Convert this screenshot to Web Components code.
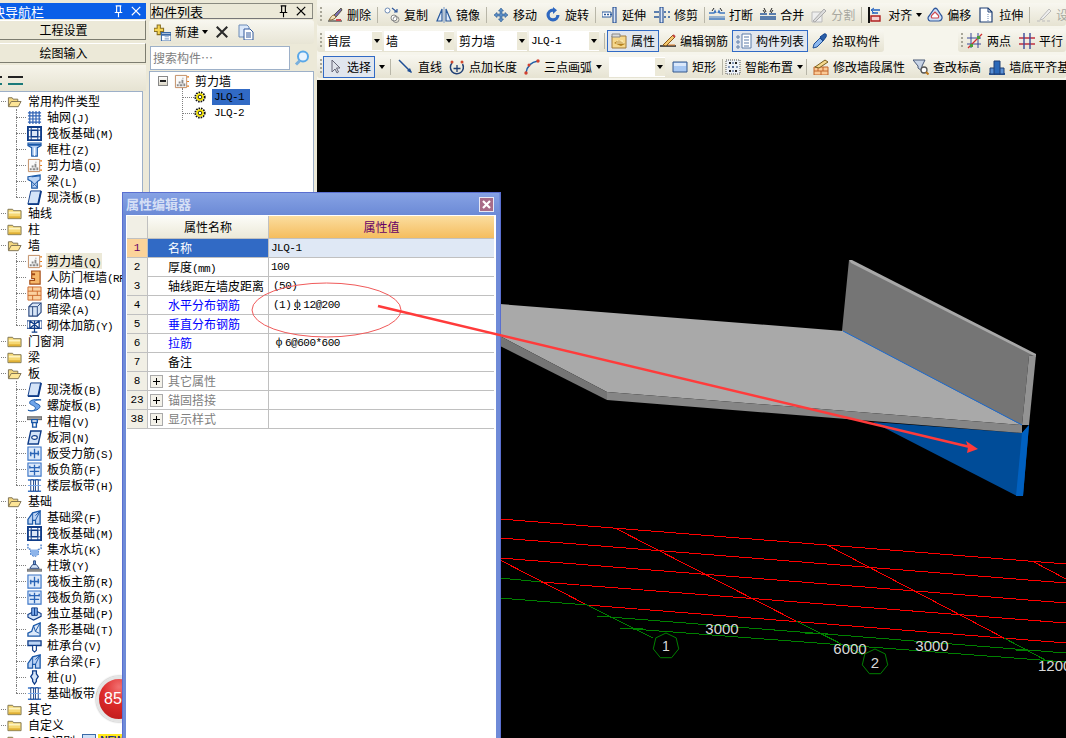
<!DOCTYPE html>
<html lang="zh">
<head>
<meta charset="utf-8">
<title>属性编辑器</title>
<style>
  html, body { margin: 0; width: 1066px; height: 738px; overflow: hidden; background: #ece9d8; }
  body { font: 12px/16px "Noto Sans CJK SC", "Liberation Sans", sans-serif; color: #000; }
</style>
</head>
<body>
<app-shell></app-shell>

<script>
const BLUE = "#1a58a8";
const DK = "#0f3c88";
const ICONS = {
  // tree
  open: `<path d="M1.5 13V4h4l1 1.5h5V8" fill="#f3d77f" stroke="#7d7050"/><path d="M1.5 13.5 4.5 8h10.5l-3 5.500z" fill="#fde596" stroke="#7d7050"/>`,
  folder: `<path d="M1 13.500V3.500h5l1 1.500h8v8.500z" fill="#f6d873" stroke="#7d7350"/><path d="M2 6h12v2H2z" fill="#fdf3c0"/><path d="M2 11h12v2H2z" fill="#e0b035"/>`,
  grid: `<path d="M1 3h14M1 6.300h14M1 9.600h14M1 13h14M3 1v14M6.300 1v14M9.600 1v14M13 1v14" stroke="#2f62b5" stroke-width="1.300" fill="none"/>`,
  raft: `<path d="M1 1h14v14H1z" fill="#fff" stroke="${DK}" stroke-width="2"/><path d="M4.500 4.500h7v7h-7z" fill="#dbe6f6" stroke="${DK}" stroke-width="1.500"/><path d="M1 4.500h3M12 4.500h3M1 11.500h3M12 11.500h3M4.500 1v3M11.500 1v3M4.500 12v3M11.500 12v3" stroke="${DK}"/>`,
  column: `<path d="M1 1h14v3l-4 2v9H5V6L1 4z" fill="#bcd4f5" stroke="${BLUE}" stroke-width="1.200"/><path d="M1 3h14" stroke="${BLUE}" stroke-width="2"/><path d="M8 6v9" stroke="#fff"/>`,
  shear: `<path d="M1.500 1.500h12v13h-12z" fill="#fafafa" stroke="#c08a60"/><path d="M3 13h2v-2H3zm3 0h3v-2H6zm4 0h2v-3h-2zM5 10h2V8H5zm3 0h2V6H8zM9 5h1V4H9z" fill="#8a8a8a"/><path d="M14 3h2M14 8h2M14 13h2" stroke="#e07818" stroke-width="1.300"/>`,
  beam: `<path d="M1 3 14 1v5l-3 2v7H5V8L1 6z" fill="#bcd4f5" stroke="${BLUE}" stroke-width="1.200"/><path d="M5 8l6 6M11 8l-5 5M5 3l9-1" stroke="${BLUE}"/>`,
  slab: `<path d="M4 1h11l-3 14H1z" fill="#d5e4f8" stroke="${DK}"/><path d="M1 15h11l3-14" fill="none" stroke="${DK}" stroke-width="2"/>`,
  door: `<path d="M5 1h9v14H3v-4h5V9H5V5h3V4H5z" fill="#f6b86a" stroke="#a24a14" stroke-width="1.200"/>`,
  brick: `<path d="M1 1h14v14H1z" fill="#fbd2a0" stroke="#cc6a2c"/><path d="M1 5.500h14M1 10h14M6 1v4.500M11 5.500V10M6 10v5" stroke="#cc6a2c"/>`,
  hidden: `<path d="M2 5 6 1h9v10l-4 4H2z" fill="#d8e5f6" stroke="#26447c" stroke-width="1.200"/><path d="M2 5h9v10M11 5l4-4" fill="none" stroke="#26447c"/><path d="M6 5v10" stroke="#26447c"/>`,
  wallbar: `<path d="M0 3h16v8H0z" fill="#fff" stroke="${DK}"/><path d="M3 3v8h10V3M3 3l10 8M13 3 3 11M8 3v12M5 15h6" fill="none" stroke="${DK}" stroke-width="1.300"/>`,
  spiral: `<path d="M1 13c5 2 10-1 7-4-3-2-6-2-5-5 1-2 6-3 12-2-4 0-7 1-7 2 0 2 6 2 6 5-1 4-8 6-13 4z" fill="#6ea4ea" stroke="${BLUE}"/>`,
  cap: `<path d="M0 3h16v3H0z" fill="#a0a0a0" stroke="#555"/><path d="M5 6h6v3H5zM6 9h4v5H6z" fill="#fff" stroke="${BLUE}" stroke-width="1.500"/>`,
  hole: `<path d="M4 1h11l-3 14H1z" fill="#d5e4f8" stroke="${DK}" stroke-width="1.500"/><ellipse cx="8" cy="8" rx="3" ry="2" fill="#fff" stroke="${DK}" stroke-width="1.200"/>`,
  barmain: `<path d="M1 1h14v14H1z" fill="#dce9fa" stroke="#3a74c6" stroke-width="1.200"/><path d="M8 3v10M3 8h10M4 6v5M12 5v5" stroke="#2a64b6" stroke-width="1.400"/>`,
  barneg: `<path d="M1 1h14v14H1z" fill="#dce9fa" stroke="#3a74c6" stroke-width="1.200"/><path d="M8 3v11M3 6h10M3 10h10M3 4v3M13 4v3" stroke="#2a64b6" stroke-width="1.400"/>`,
  band: `<path d="M1 2h14M1 14h14" stroke="#3a74c6" stroke-width="1.600"/><path d="M4 2h3v12H4zM9 2h3v12H9z" fill="#fff" stroke="${DK}"/><path d="M1 8h14" stroke="#7aa8e8"/>`,
  fbeam: `<path d="M1 15V10L6 3l8-2v14H9v-4H6v4z" fill="#bcd4f5" stroke="${BLUE}" stroke-width="1.400"/><path d="M6 3v8M9 11 14 1M9 6l5-5" stroke="${BLUE}"/>`,
  pit: `<path d="M1 2v5l3 1v5l3 2h2l3-2V8l3-1V2" fill="none" stroke="#3a74c6" stroke-width="1.400" stroke-dasharray="2 1"/><path d="M4 8h8v5l-3 2H7l-3-2z" fill="#8db4ea"/>`,
  pier: `<path d="M0 12h16v2H0z" fill="#a0a0a0" stroke="#666"/><path d="M3 11 6 7h4l3 4z" fill="#d5e4f8" stroke="#26447c"/><path d="M7 3h2v4H7z" fill="#7aa8e8" stroke="#26447c"/>`,
  iso: `<path d="M1 9l8-4 6 3v3l-8 4-6-3z" fill="#d5e4f8" stroke="${DK}" stroke-width="1.200"/><path d="M5 2h6v8H5z" fill="#7aa8e8" stroke="${DK}"/><path d="M8 2v8" stroke="${DK}"/>`,
  strip: `<path d="M1 15v-3l4-2 2-6 7-3v14z" fill="#dce9fa" stroke="${BLUE}" stroke-width="1.400"/><path d="M7 4l2 6 4 2M9 10 14 1" fill="none" stroke="${BLUE}"/>`,
  pilecap: `<path d="M1 3h14v5H1z" fill="#bcd4f5" stroke="${DK}" stroke-width="1.400"/><path d="M6 8h4v5l-2 2-2-2z" fill="#fff" stroke="${DK}" stroke-width="1.200"/>`,
  pile: `<path d="M6 1h4v3l2 3-2 3v2l-2 3-2-3v-2L4 7l2-3z" fill="#d5e4f8" stroke="${DK}" stroke-width="1.400"/>`,
  // toolbar
  brush: `<path d="M1 14h14" stroke="#222"/><path d="M14 1 7 8l2 2 6-7z" fill="#7b6db0" stroke="#554"/><path d="M7 8c-2 0-3 2-5 5 3 0 6-1 7-3z" fill="#f3e3bc" stroke="#8a6a3a"/><path d="M9 13h5" stroke="#d04a50" stroke-width="2"/>`,
  copy: `<circle cx="3.500" cy="3.500" r="2.500" fill="#fff" stroke="#6d8bb5"/><circle cx="10" cy="11" r="3" fill="#fff" stroke="#888"/><circle cx="12" cy="12.500" r="3" fill="none" stroke="#888"/><path d="M8 1l5 4M13 2v3h-3" fill="none" stroke="#30589c" stroke-width="1.200"/>`,
  mirror: `<path d="M6 2 1 14h5zM10 2l5 12h-5z" fill="#e0ebfa" stroke="#2a5a9c" stroke-width="1.200"/><path d="M8 0v16" stroke="#7a9ac8"/>`,
  move: `<path d="M8 1 5.500 4H7v3H4V5.500L1 8l3 2.500V9h3v3H5.500L8 15l2.500-3H9V9h3v1.500L15 8l-3-2.500V7H9V4h1.500z" fill="#5a8cc4" stroke="#2c5a90" stroke-width=".6"/>`,
  rotate: `<path d="M8 1.500a6.500 6.500 0 1 0 6.500 6.500h-3.200A3.300 3.300 0 1 1 8 4.700V7l4-3.700L8 0z" fill="#2e68c0"/>`,
  extend: `<path d="M11 0h3v16h-3z" fill="#dbe6f6" stroke="${DK}"/><path d="M0 5h9v5H0z" fill="#fff" stroke="#2a5a9c"/><path d="M2 7.500h8" stroke="#2a5a9c" stroke-dasharray="2 1" stroke-width="1.500"/>`,
  trim: `<path d="M6 0h3v16H6z" fill="#dbe6f6" stroke="${DK}"/><path d="M0 5h5M0 10h5" stroke="#2a5a9c" stroke-width="1.500"/><path d="M10 5h2M14 5h2M10 10h2M14 10h2" stroke="#2a5a9c" stroke-width="1.500"/>`,
  break: `<path d="M0 6h5l1-2 1 2M9 6l1-2 1 2h5M0 12h16" fill="none" stroke="#3f78c0" stroke-width="1.500"/><path d="M0 10h16" stroke="#3f78c0"/><path d="M5 1 3 4M11 1l2 3" stroke="#222"/>`,
  merge: `<path d="M0 7h7M9 7h7M0 12h16M0 10h16" stroke="#2a5a9c" stroke-width="1.300"/><path d="M4 1l2 4M12 1l-2 4M3 3l2 3M13 3l-2 3" stroke="#222"/>`,
  split: `<path d="M1 5h10v10H1z" fill="#eee" stroke="#bbb"/><path d="M2 14 13 2l2 2L4 15z" fill="#ddd" stroke="#aaa"/>`,
  align: `<path d="M1 0v16" stroke="#111" stroke-width="2"/><path d="M4 3h8M4 6h6" stroke="#1f5fbf" stroke-width="1.600"/><path d="M3 9h9v5H3z" fill="#f6d0d0" stroke="#b02020" stroke-width="1.400"/><path d="M6 1 3 3l3 3" fill="none" stroke="#1f5fbf"/>`,
  offset: `<path d="M3 14a3 3 0 0 1-1-5l5-7c1-1 2-1 3 0l4 6c2 2 1 6-2 6z" fill="#cfe0f7" stroke="#30589c" stroke-width="1.200"/><path d="M5 11a2 2 0 0 1 0-3l3-3 3 3a2 2 0 0 1 0 3z" fill="#fff" stroke="#d04a50" stroke-width="1.200"/>`,
  stretch: `<path d="M1 1h8l4 4v10H1z" fill="#fff" stroke="#1f3f74" stroke-width="1.200"/><path d="M9 1v4h4" fill="none" stroke="#1f3f74"/><path d="M9 7v7M12 9l1 2" stroke="#6d8bb5" stroke-dasharray="1 1"/>`,
  setting: `<path d="M1 14h3M6 14h3M11 14h3" stroke="#bbb"/><path d="M5 11 13 2l2 2-8 8-3 1z" fill="#eee" stroke="#bbb"/>`,
  prop: `<path d="M1 3h14v12H1z" fill="#f6d88c" stroke="#a07a3c"/><path d="M1 1h8v3H1z" fill="#dcdcdc" stroke="#888"/><path d="M3 10l5-3 6 4-4 2z" fill="#b47f1c"/><path d="M5 10h8M6 8h6" stroke="#fff3c8"/>`,
  editbar: `<path d="M0 13h16" stroke="#222" stroke-width="1.300"/><path d="M3 12 13 2l2 2L6 13z" fill="#f4c86c" stroke="#8a5a1a"/><path d="M13 2l2 2" stroke="#c04040" stroke-width="2"/><path d="M8 12h7" stroke="#e08030"/>`,
  list: `<path d="M6 1h9v14H6z" fill="#fff" stroke="#5a7aa8"/><path d="M8 4h5M8 7h5M8 10h5M8 13h5" stroke="#5a7aa8"/><path d="M1 3h2v2H1zM1 8h2v2H1zM1 13h2v2H1z" fill="#fff" stroke="#5a7aa8"/>`,
  pick: `<path d="M1 15l1-4 6-6 3 3-6 6z" fill="#8db8ee" stroke="#1f4f96"/><path d="M8 4l4-3c2-1 3 1 2 3l-3 4z" fill="#2a5fa8" stroke="#12408a"/>`,
  twopt: `<path d="M0 5h14M0 11h14M4 0v15M11 0v15" stroke="#3a4a9a"/><path d="M1 15 15 1" stroke="#d03030" stroke-width="1.200"/><path d="M3 11h3v3H3zM10 3h3v3h-3z" fill="#4aa03a"/>`,
  para: `<path d="M0 5h16M0 11h16" stroke="#c03040" stroke-width="1.400"/><path d="M5 0v16M11 0v16" stroke="#3a4a9a" stroke-width="1.400"/>`,
  cursor: `<path d="M5 1v12l3-3 2 4 1.500-1-2-4h3.500z" fill="#dfe3ea" stroke="#667"/>`,
  line: `<path d="M1 1l12 12" stroke="#1f4f96" stroke-width="1.500"/><path d="M14 14l-2-5-3 3z" fill="#1f4f96"/>`,
  ptlen: `<path d="M13.500 5A6.500 6.500 0 1 1 3 4" fill="none" stroke="#1f3f74" stroke-width="1.500"/><path d="M8 6v7M4.500 9.500h7" stroke="#1f3f74" stroke-width="1.300"/><circle cx="3" cy="3" r="1.500" fill="#d04a30"/><circle cx="13" cy="3" r="1.500" fill="#d04a30"/>`,
  arc: `<path d="M2 14C3 7 7 3 14 2" fill="none" stroke="#1f5fa8" stroke-width="1.500"/><circle cx="2" cy="14" r="1.700" fill="#d04030"/><circle cx="5" cy="6" r="1.500" fill="#d04030"/><circle cx="14" cy="2" r="1.700" fill="#d04030"/>`,
  rect: `<path d="M1 3h14v10H1z" fill="#a8c8f2" stroke="#35588c"/><path d="M2 4h12v3H2z" fill="#dbe8fa"/>`,
  smart: `<path d="M1 1h14v14H1z" fill="#eef2f8" stroke="#555" stroke-dasharray="1 1"/><path d="M8 3v10M3 8h10" stroke="#1f3f74" stroke-dasharray="2 2"/><path d="M4 3h2v2H4zM10 3h2v2h-2zM4 11h2v2H4zM10 11h2v2h-2z" fill="#222"/>`,
  wallfix: `<path d="M1 8h14v8H1z" fill="#fbc995" stroke="#c0642a"/><path d="M1 12h14M5 8v4M10 8v4M8 12v4" stroke="#c0642a"/><path d="M2 8 12 1l3 2-9 6z" fill="#f6d88c" stroke="#7a6020"/>`,
  level: `<path d="M0 1h12L9 7v5L5 9V7z" fill="#c8d4e6" stroke="#4a5a78"/><circle cx="11" cy="11" r="3" fill="#fff" stroke="#555" stroke-width="1.300"/><path d="M13 13l2.500 2.500" stroke="#c07818" stroke-width="2"/>`,
  wallbase: `<path d="M0 15h16" stroke="#2a5a9c" stroke-width="2"/><path d="M1 9h5v6H1zM10 9h5v6h-5z" fill="#5a90d4" stroke="#1f3f74"/><path d="M5 2h6v13H5z" fill="#2a68b8" stroke="#1f3f74"/>`,
  newitem: `<path d="M3 1h3v3h3v3H6v3H3V7H0V4h3z" fill="#f5d452" stroke="#8a7020"/><path d="M7 8h9v8H7z" fill="#fff" stroke="#3a6aa8"/><path d="M7 10h9" stroke="#3a6aa8" stroke-width="2"/><path d="M10 12h4M10 14h4" stroke="#8aa8d0"/>`,
  del: `<path d="M2 2l12 12M14 2 2 14" stroke="#2a2a2a" stroke-width="2.400"/>`,
  doc: `<path d="M1 1h8l2 2v10H1z" fill="#dbe8fa" stroke="#6d8bb5"/><path d="M6 5h6l3 3v8H6z" fill="#fff" stroke="#30589c"/><path d="M8 9h5M8 11h5M8 13h5" stroke="#30589c"/>`,
  search: `<circle cx="9" cy="6.500" r="5" fill="#eaf4ff" stroke="#5aa8e8" stroke-width="2"/><path d="M6 10.500 2 14.500" stroke="#7ab0dc" stroke-width="3"/>`,
  gear: `<circle cx="8" cy="8" r="6" fill="none" stroke="#111" stroke-width="3" stroke-dasharray="2 1.200"/><circle cx="8" cy="8" r="5" fill="#ffee00"/><circle cx="8" cy="8" r="2.400" fill="#fff" stroke="#222" stroke-width="1.300"/>`,
  pin: `<path d="M5 2h6M6 2v7M10 2v7M4 9h8M8 9v5" fill="none" stroke="currentColor" stroke-width="1.200"/>`,
  close: `<path d="M3 3l9 9M12 3l-9 9" stroke="currentColor" stroke-width="1.200"/>`,
  closeb: `<path d="M3 3l7 7M10 3l-7 7" stroke="currentColor" stroke-width="2.200"/>`
};

class XIcon extends HTMLElement {
  connectedCallback() {
    const size = this.getAttribute("size") || 16;
    const box = this.getAttribute("box") || 16;
    this.attachShadow({ mode: "open" }).innerHTML = `
      <style>:host{display:inline-block;width:${size}px;height:${size}px;flex:none;line-height:0}svg{display:block}</style>
      <svg width="${size}" height="${size}" viewBox="0 0 ${box} ${box}">${ICONS[this.getAttribute("name")] || ""}</svg>`;
  }
}
customElements.define("x-icon", XIcon);

//////////////////////////////////tree
class TreeRow extends HTMLElement {
  connectedCallback() {
    const kind = this.getAttribute("kind") || "leaf";
    const folder = kind !== "leaf";
    const label = this.getAttribute("label");
    const key = this.getAttribute("key") || "";
    const icon = this.getAttribute("icon") || (kind === "open" ? "open" : "folder");
    this.attachShadow({ mode: "open" }).innerHTML = `
      <style>
        :host{display:flex;align-items:center;height:16px;position:relative;white-space:nowrap;padding-left:${folder ? 25 : 45}px}
        .dots-h{position:absolute;top:8px;left:${folder ? 13 : 34}px;width:${folder ? 11 : 10}px;border-top:1px dotted #808080}
        .dots-v{position:absolute;top:0;left:34px;height:${this.hasAttribute("last") ? 8 : 16}px;border-left:1px dotted #808080}
        .text{margin-left:${folder ? 5 : 4}px;padding:0 1px;height:16px;line-height:16px}
        :host([selected]) .text{background:#ece9d8}
        .k{font:11px/16px "Liberation Mono",monospace;letter-spacing:-.6px}
      </style>
      ${folder ? "" : '<span class="dots-v"></span>'}
      <span class="dots-h"></span>
      <x-icon name="${icon}" size="15"></x-icon>
      <span class="text">${label}<span class="k">${key}</span></span>
      <slot></slot>`;
  }
}
customElements.define("tree-row", TreeRow);

const NAV_ROWS = [
  ["open", "常用构件类型"],
  ["grid", "轴网", "(J)"], ["raft", "筏板基础", "(M)"], ["column", "框柱", "(Z)"], ["shear", "剪力墙", "(Q)"], ["beam", "梁", "(L)"], ["slab", "现浇板", "(B)", "last"],
  ["folder", "轴线"], ["folder", "柱"], ["open", "墙"],
  ["shear", "剪力墙", "(Q)", "selected"], ["door", "人防门框墙", "(RF)"], ["brick", "砌体墙", "(Q)"], ["hidden", "暗梁", "(A)"], ["wallbar", "砌体加筋", "(Y)", "last"],
  ["folder", "门窗洞"], ["folder", "梁"], ["open", "板"],
  ["slab", "现浇板", "(B)"], ["spiral", "螺旋板", "(B)"], ["cap", "柱帽", "(V)"], ["hole", "板洞", "(N)"], ["barmain", "板受力筋", "(S)"], ["barneg", "板负筋", "(F)"], ["band", "楼层板带", "(H)", "last"],
  ["open", "基础"],
  ["fbeam", "基础梁", "(F)"], ["raft", "筏板基础", "(M)"], ["pit", "集水坑", "(K)"], ["pier", "柱墩", "(Y)"], ["barmain", "筏板主筋", "(R)"], ["barneg", "筏板负筋", "(X)"], ["iso", "独立基础", "(P)"], ["strip", "条形基础", "(T)"], ["pilecap", "桩承台", "(V)"], ["fbeam", "承台梁", "(F)"], ["pile", "桩", "(U)"], ["band", "基础板带", "(W)", "last"],
  ["folder", "其它"], ["folder", "自定义"], ["folder", "CAD识别"]
];

class DockTitle extends HTMLElement {
  connectedCallback() {
    this.attachShadow({ mode: "open" }).innerHTML = `
      <style>
        :host{display:flex;align-items:center;height:16px;box-sizing:border-box;overflow:hidden;font-size:13px;line-height:15px}
        .t{flex:1;white-space:nowrap}
        x-icon{margin-left:3px}
      </style>
      <span class="t"><slot></slot></span>
      <x-icon name="pin" size="15"></x-icon>
      <x-icon name="close" size="15"></x-icon>`;
  }
}
customElements.define("dock-title", DockTitle);

class NavPanel extends HTMLElement {
  connectedCallback() {
    const rows = NAV_ROWS.map(([icon, label, key, flag]) => {
      if (icon === "open" || icon === "folder") {
        const extra = label === "CAD识别"
          ? '<span class="cad"></span><span class="new">NEW</span>' : "";
        return `<tree-row kind="${icon}" label="${label}">${extra}</tree-row>`;
      }
      return `<tree-row icon="${icon}" label="${label}" key="${key}" ${flag || ""}></tree-row>`;
    }).join("");
    this.attachShadow({ mode: "open" }).innerHTML = `
      <style>
        :host{display:flex;flex-direction:column;width:165px;margin-left:-19px;padding-top:3px;box-sizing:border-box;flex:none;height:738px;overflow:hidden}
        dock-title{background:#0a5fe8;color:#fff;padding-right:2px;margin-bottom:1px;flex:none}
        .btn{height:20px;box-sizing:border-box;line-height:18px;text-align:center;background:#ece9d8;border:1px solid;border-color:#fff #7d7d70 #7d7d70 #fff;margin-bottom:3px;flex:none}
        .mini{height:26px;display:flex;align-items:center;gap:6px;padding-left:14px;background:linear-gradient(#f6f4ea,#e6e3d2);flex:none;box-sizing:border-box;padding-top:4px;margin-top:-1px}
        .mini i{display:block;width:7px;height:5px;border-top:2px solid #222;border-bottom:2px solid #1a7a7a}
        .mini i+i{width:15px}
        .tree{flex:1;margin-right:3px;background:#fff;border:1px solid #9db0c8;padding-top:1px}
        .cad{display:inline-block;width:14px;height:14px;background:#cfe0f7;border:1px solid #3a6aa8;margin-left:6px;box-sizing:border-box}
        .new{font:bold 10px/14px "Liberation Sans",sans-serif;background:#ffe81a;color:#1a2a8a;margin-left:2px;padding:0 2px}
      </style>
      <dock-title><span style="margin-left:-2px">模块导航栏</span></dock-title>
      <div class="btn">工程设置</div>
      <div class="btn">绘图输入</div>
      <div class="mini"><i></i><i></i></div>
      <div class="tree">${rows}</div>`;
  }
}
customElements.define("nav-panel", NavPanel);

class ListPanel extends HTMLElement {
  connectedCallback() {
    this.attachShadow({ mode: "open" }).innerHTML = `
      <style>
        :host{display:flex;flex-direction:column;width:165px;margin:0 3px;padding-top:3px;box-sizing:border-box;flex:none;height:738px}
        dock-title{border:1px solid #8a8a80;border-bottom-color:#777;padding-right:3px;margin:0 1px 1px 1px;flex:none}
        .tools{height:24px;display:flex;align-items:center;padding-left:5px;border-radius:3px;background:linear-gradient(#f8f7f0,#e8e5d5);margin-bottom:1px;flex:none}
        .tools .caret{width:0;height:0;border:3px solid transparent;border-top:4px solid #000;border-bottom:0;margin:0 7px 0 3px}
        .tools span{margin-left:4px}
        .search{height:26px;display:flex;align-items:center;gap:4px;padding-left:1px;flex:none}
        .input{width:136px;height:22px;border:1px solid #9db0c8;background:#fff;color:#808080;line-height:21px;padding-left:2px}
        .tree{flex:1;background:#fff;border:1px solid #9db0c8;position:relative;padding-top:1px}
        .root,.leaf{display:flex;align-items:center;height:16px;position:relative}
        .plus{width:8px;height:8px;border:1px solid #888;background:linear-gradient(#fff,#ddd8c8);margin:0 6px 0 8px;position:relative}
        .plus::after{content:"";position:absolute;left:1px;right:1px;top:3px;border-top:2px solid #222;height:0}
        .root span{margin-left:6px}
        .leaf{padding-left:44px}
        .leaf span{font:11px/16px "Liberation Mono",monospace;letter-spacing:-.6px;margin-left:6px;padding:0 6px 0 2px;height:16px}
        .leaf.sel span{background:#316ac5}
        .leaf::before{content:"";position:absolute;left:32px;top:8px;width:12px;border-top:1px dotted #808080}
        .v{position:absolute;left:32px;top:16px;height:32px;border-left:1px dotted #808080}
      </style>
      <dock-title>构件列表</dock-title>
      <div class="tools">
        <x-icon name="newitem" size="17"></x-icon><span>新建</span><i class="caret"></i>
        <x-icon name="del" size="14"></x-icon><x-icon name="doc" style="margin-left:9px"></x-icon>
      </div>
      <div class="search"><div class="input">搜索构件…</div><x-icon name="search"></x-icon></div>
      <div class="tree">
        <div class="v"></div>
        <div class="root"><i class="plus"></i><x-icon name="shear" size="15"></x-icon><span>剪力墙</span></div>
        <div class="leaf sel"><x-icon name="gear" size="12"></x-icon><span>JLQ-1</span></div>
        <div class="leaf"><x-icon name="gear" size="12"></x-icon><span>JLQ-2</span></div>
      </div>`;
  }
}
customElements.define("list-panel", ListPanel);

////////////////////////Toolbars
class ToolItem extends HTMLElement {
  connectedCallback() {
    const caret = this.hasAttribute("caret") ? '<i class="caret"></i>' : "";
    this.attachShadow({ mode: "open" }).innerHTML = `
      <style>
        :host{display:flex;align-items:center;height:22px;padding:0 4px;white-space:nowrap;box-sizing:border-box;flex:none;border:1px solid transparent;margin:0 -1px}
        :host([active]){border-color:#316ac5;background:#e1e6ee;margin:0;padding:0 3px}
        :host([disabled]){color:#a8a8a0}
        .l{margin-left:4px}
        .caret{width:0;height:0;border:3px solid transparent;border-top:4px solid #000;border-bottom:0;margin-left:4px;margin-right:1px}
        :host([tight]) .caret{margin-right:-3px}
      </style>
      <x-icon name="${this.getAttribute("icon")}"></x-icon><span class="l">${this.getAttribute("label")}</span>${caret}`;
  }
}
customElements.define("tool-item", ToolItem);

class ToolCombo extends HTMLElement {
  connectedCallback() {
    const w = this.getAttribute("w") || 70;
    this.attachShadow({ mode: "open" }).innerHTML = `
      <style>
        :host{display:flex;align-items:center;width:${w}px;height:20px;margin-right:3px;background:#fff;flex:none;padding-left:2px;box-sizing:border-box}
        .t{flex:1}
        .b{width:10px;height:18px;background:#ece9d8;display:flex;align-items:center;justify-content:center}
        .b i{width:0;height:0;border:3px solid transparent;border-top:4px solid #000;border-bottom:0}
        .m{font:11px/16px "Liberation Mono",monospace;letter-spacing:-.6px}
      </style>
      <span class="t ${this.hasAttribute("mono") ? "m" : ""}"><slot></slot></span><span class="b"><i></i></span>`;
  }
}
customElements.define("tool-combo", ToolCombo);

class ToolBar extends HTMLElement {
  connectedCallback() {
    this.attachShadow({ mode: "open" }).innerHTML = `
      <style>
        :host{display:flex;align-items:center;height:23px;padding-left:3px;border-radius:3px;background:linear-gradient(#f8f7f0,#e6e3d2);overflow:hidden;box-sizing:border-box;flex:none}
        .grip{width:2px;height:16px;margin-right:1px;flex:none;background:repeating-linear-gradient(#a8a698 0 2px,transparent 2px 4px)}
      </style>
      <span class="grip"></span><slot></slot>`;
  }
}
customElements.define("tool-bar", ToolBar);

class ToolSep extends HTMLElement {
  connectedCallback() {
    this.attachShadow({ mode: "open" }).innerHTML = `
      <style>:host{display:block;width:1px;height:16px;margin:0 2px;background:#b8b6a8;flex:none}</style>`;
  }
}
customElements.define("tool-sep", ToolSep);

//////////////////////////////////3D canvas
const heptagon = (cx, cy, r) => Array.from({ length: 7 }, (_, i) => {
  const a = -Math.PI / 2 + i * 2 * Math.PI / 7;
  return `${(cx + r * Math.cos(a)).toFixed(1)},${(cy + r * Math.sin(a)).toFixed(1)}`;
}).join(" ");

class CadCanvas extends HTMLElement {
  connectedCallback() {
    const reds = [[500,519,1066,564],[500,538,1066,583],[500,558,1066,603],[541,582,1066,623],[587,605,1066,643],
      [500,560,587,605],[615,528,796,621],[825,544,1004,638],[1032,561,1066,579]];
    const greens = [[500,578,541,582],[500,598,587,605],[597,616,1066,653],[620,628,1066,662],
      [587,605,653,638],[796,621,863,655],[1004,638,1049,662],[632,628,643,628],[805,633,828,633],[1016,650,1040,650]];
    const seg = (list, c) => list.map(([a,b,d,e]) => `<line x1="${a}" y1="${b}" x2="${d}" y2="${e}" stroke="${c}"/>`).join("");
    this.attachShadow({ mode: "open" }).innerHTML = `
      <style>
        :host{display:block;flex:1;background:#000;overflow:hidden;position:relative}
        svg{display:block}
        text{font-family:"Liberation Sans",sans-serif;fill:#d8d8d8}
      </style>
      <svg width="749" height="658" viewBox="317 80 749 658">
        <polygon points="873,422 1022,433 1029,425 1023,496 1017,496" fill="#004c98"/>
        <polygon points="1022,433 1029,425 1023,496 1016,496" fill="#0060c0"/>
        <polygon points="849,260 1036,355 1029,356 1022,425 842,331" fill="#757575"/>
        <polygon points="849,260 852,260 1036,354 1036,357 851,263" fill="#a8a8a8"/>
        <polygon points="1029,356 1036,355 1029,425 1022,425" fill="#939393"/>
        <polygon points="500,304 843,331 1022,425 607,392 500,336" fill="#a9a9a9"/>
        <polygon points="500,336 607,392 607,400 500,346" fill="#757575"/>
        <polygon points="607,392 1022,425 1022,433 607,400" fill="#868686"/>
        <line x1="843" y1="331" x2="1022" y2="425" stroke="#1a6ad0"/>
        <g shape-rendering="crispEdges" stroke-width="1">${seg(reds, "#ff0000")}${seg(greens, "#008000")}</g>
        <polygon points="${heptagon(666, 646, 13)}" fill="#000" stroke="#008000"/>
        <polygon points="${heptagon(875, 662, 13)}" fill="#000" stroke="#008000"/>
        <text x="666" y="651" font-size="14" text-anchor="middle">1</text>
        <text x="875" y="668" font-size="15" text-anchor="middle">2</text>
        <text x="722" y="634" font-size="15" text-anchor="middle">3000</text>
        <text x="850" y="654" font-size="15" text-anchor="middle">6000</text>
        <text x="932" y="651" font-size="15" text-anchor="middle">3000</text>
        <text x="1038" y="671" font-size="15">12000</text>
      </svg>`;
  }
}
customElements.define("cad-canvas", CadCanvas);

class MainArea extends HTMLElement {
  connectedCallback() {
    this.attachShadow({ mode: "open" }).innerHTML = `
      <style>
        :host{display:flex;flex-direction:column;flex:1;min-width:0;height:738px;padding-top:3px;box-sizing:border-box;overflow:hidden;background:#f6f5ec}
        .row{display:flex;height:23px;margin-bottom:3px;flex:none;justify-content:space-between}
        .row.last{margin-bottom:2px}
        tool-bar.wide{width:749px}
        .caret{width:0;height:0;border:3px solid transparent;border-top:4px solid #000;border-bottom:0;margin:0 1px 0 4px}
      </style>
      <div class="row">
      <tool-bar class="wide">
        <tool-item icon="brush" label="删除"></tool-item><tool-sep></tool-sep>
        <tool-item icon="copy" label="复制"></tool-item>
        <tool-item icon="mirror" label="镜像"></tool-item><tool-sep></tool-sep>
        <tool-item icon="move" label="移动"></tool-item>
        <tool-item icon="rotate" label="旋转"></tool-item><tool-sep></tool-sep>
        <tool-item icon="extend" label="延伸"></tool-item>
        <tool-item icon="trim" label="修剪"></tool-item><tool-sep></tool-sep>
        <tool-item icon="break" label="打断" style="margin-left:-3px"></tool-item>
        <tool-item icon="merge" label="合并" style="margin-left:-2px"></tool-item>
        <tool-item icon="split" label="分割" disabled style="margin-left:-2px"></tool-item><tool-sep></tool-sep>
        <tool-item icon="align" label="对齐" caret tight></tool-item>
        <tool-item icon="offset" label="偏移"></tool-item>
        <tool-item icon="stretch" label="拉伸"></tool-item><tool-sep></tool-sep>
        <tool-item icon="setting" label="设置" disabled></tool-item>
      </tool-bar>
      </div>
      <div class="row">
        <tool-bar style="width:567px">
          <tool-combo w="57" style="margin-left:2px;margin-right:2px">首层</tool-combo>
          <tool-combo>墙</tool-combo>
          <tool-combo style="margin-right:2px">剪力墙</tool-combo>
          <tool-combo mono>JLQ-1</tool-combo>
          <tool-sep></tool-sep>
          <tool-item icon="prop" label="属性" active></tool-item>
          <tool-item icon="editbar" label="编辑钢筋" style="margin-left:-4px"></tool-item>
          <tool-item icon="list" label="构件列表" active></tool-item>
          <tool-item icon="pick" label="拾取构件"></tool-item>
        </tool-bar>
        <tool-bar style="width:108px">
          <tool-item icon="twopt" label="两点" style="margin-left:-2px"></tool-item>
          <tool-item icon="para" label="平行"></tool-item>
        </tool-bar>
      </div>
      <div class="row last">
        <tool-bar class="wide">
          <tool-item icon="cursor" label="选择" active></tool-item>
          <span class="caret"></span><tool-sep style="margin:0 3px 0 4px"></tool-sep>
          <tool-item icon="line" label="直线"></tool-item>
          <tool-item icon="ptlen" label="点加长度" style="margin-left:-2px"></tool-item>
          <tool-item icon="arc" label="三点画弧" caret style="margin-left:-2px;margin-right:1px"></tool-item>
          <tool-combo w="56"></tool-combo>
          <tool-item icon="rect" label="矩形"></tool-item><tool-sep></tool-sep>
          <tool-item icon="smart" label="智能布置" caret tight style="margin-left:-5px"></tool-item><tool-sep></tool-sep>
          <tool-item icon="wallfix" label="修改墙段属性"></tool-item>
          <tool-item icon="level" label="查改标高"></tool-item>
          <tool-item icon="wallbase" label="墙底平齐基础"></tool-item>
        </tool-bar>
      </div>
      <cad-canvas></cad-canvas>`;
  }
}
customElements.define("main-area", MainArea);

////////////////////////Property editor
class PropRow extends HTMLElement {
  connectedCallback() {
    const expand = this.hasAttribute("group") ? '<i class="plus"></i>' : "";
    const unit = this.getAttribute("unit");
    this.attachShadow({ mode: "open" }).innerHTML = `
      <style>
        :host{display:grid;grid-template-columns:21px 121px 1fr;height:19px;box-sizing:border-box;border-bottom:1px solid #c0c0c0}
        .n{background:#f1efe5;text-align:center;border-right:1px solid #c0c0c0;font:11px/18px "Liberation Mono",monospace}
        .l{position:relative;padding-left:20px;border-right:1px solid #c0c0c0;line-height:18px;white-space:nowrap}
        .l b{font:11px/18px "Liberation Mono",monospace;letter-spacing:-.6px}
        .v{padding-left:2px;font:11px/18px "Liberation Mono",monospace;letter-spacing:-.5px;white-space:pre}
        :host([indent]) .v{padding-left:4px}
        :host([link]) .l{color:#0000ff}
        :host([group]) .l{color:#808080}
        :host([sel]) .n{background:#fbd39a;color:#660066}
        :host([sel]) .l{background:#316ac5;color:#fff}
        :host([sel]) .v{background:#dfe8f5}
        .plus{position:absolute;left:2px;top:3px;width:11px;height:11px;border:1px solid #aaa;background:#f4f2ea}
        .plus::before{content:"";position:absolute;left:2px;right:2px;top:5px;border-top:1px solid #000}
        .plus::after{content:"";position:absolute;top:2px;bottom:2px;left:5px;border-left:1px solid #000}
      </style>
      <div class="n">${this.getAttribute("n")}</div>
      <div class="l">${expand}${this.getAttribute("label")}${unit ? `<b>${unit}</b>` : ""}</div>
      <div class="v"><slot></slot></div>`;
  }
}
customElements.define("prop-row", PropRow);

class PropEditor extends HTMLElement {
  connectedCallback() {
    this.attachShadow({ mode: "open" }).innerHTML = `
      <style>
        :host{position:absolute;left:122px;top:192px;width:379px;height:546px;box-sizing:border-box;border:1px solid #5a6fd0;border-bottom:0;background:#6f8bd8;z-index:5;display:flex;flex-direction:column;padding:0 4px 0 3px}
        .bar{height:22px;flex:none;display:flex;align-items:center;justify-content:space-between;background:linear-gradient(#86a2e4,#6c8ad6);margin:0 -3px 0 -3px;padding:0 5px 0 3px;color:#d5dff5;font-weight:bold;font-size:13px}
        .x{width:13px;height:13px;background:#a86c88;border:1px solid #e8e8f4;color:#fff;display:flex}
        .body{flex:1;background:#fff;padding:1px 2px 0 1px}
        .head{display:grid;grid-template-columns:21px 121px 1fr;height:22px;line-height:22px;text-align:center;border-bottom:1px solid #c0c0c0}
        .c0{background:#f1efe5;border-right:1px solid #c0c0c0}
        .c1{background:linear-gradient(#fcfcf8,#ece9d8);border-right:1px solid #c0c0c0}
        .c2{background:linear-gradient(#fbdd9f,#f5bd5e);color:#660066}
      </style>
      <div class="bar">属性编辑器<span class="x"><x-icon name="closeb" size="13" box="13"></x-icon></span></div>
      <div class="body">
        <div class="head"><div class="c0"></div><div class="c1">属性名称</div><div class="c2">属性值</div></div>
        <slot></slot>
      </div>`;
  }
}
customElements.define("prop-editor", PropEditor);

//////////////////////////////////Overlays
class AlertBadge extends HTMLElement {
  connectedCallback() {
    this.attachShadow({ mode: "open" }).innerHTML = `
      <style>
        :host{position:absolute;left:96px;top:676px;width:46px;height:46px;box-sizing:border-box;border-radius:50%;border:3px solid #e4e4e4;background:radial-gradient(circle at 50% 20%,#f27070,#dd2a2a 45%,#b81818);color:#fff;font:16px/40px "Liberation Sans",sans-serif;padding-left:5px;z-index:3;box-shadow:0 0 2px #888}
      </style>85`;
  }
}
customElements.define("alert-badge", AlertBadge);

class MarkupLayer extends HTMLElement {
  connectedCallback() {
    this.attachShadow({ mode: "open" }).innerHTML = `
      <style>:host{position:absolute;left:0;top:0;width:1066px;height:738px;z-index:9;pointer-events:none}svg{display:block}</style>
      <svg width="1066" height="738" viewBox="0 0 1066 738">
        <ellipse cx="326.500" cy="310" rx="74.500" ry="27" fill="none" stroke="#f05a5a"/>
        <line x1="378" y1="306" x2="970" y2="447" stroke="#ff3b3b" stroke-width="2.500"/>
        <polygon points="978,449 966,441 968,447 967,453" fill="#ff3b3b"/>
      </svg>`;
  }
}
customElements.define("markup-layer", MarkupLayer);

const RB = 'style="display:inline-block;width:12px;text-align:center;letter-spacing:0"';
class AppShell extends HTMLElement {
  connectedCallback() {
    this.attachShadow({ mode: "open" }).innerHTML = `
      <style>:host{display:flex;width:1066px;height:738px;position:relative;overflow:hidden;background:#ece9d8}</style>
      <nav-panel></nav-panel>
      <list-panel></list-panel>
      <main-area></main-area>
      <alert-badge></alert-badge>
      <prop-editor>
        <prop-row n="1" label="名称" sel>JLQ-1</prop-row>
        <prop-row n="2" label="厚度" unit="(mm)">100</prop-row>
        <prop-row n="3" label="轴线距左墙皮距离" indent>(50)</prop-row>
        <prop-row n="4" label="水平分布钢筋" link indent>(1)<span ${RB}><u>ф</u></span>12@200</prop-row>
        <prop-row n="5" label="垂直分布钢筋" link></prop-row>
        <prop-row n="6" label="拉筋" link indent><span ${RB}>ф</span>6@600*600</prop-row>
        <prop-row n="7" label="备注"></prop-row>
        <prop-row n="8" label="其它属性" group></prop-row>
        <prop-row n="23" label="锚固搭接" group></prop-row>
        <prop-row n="38" label="显示样式" group></prop-row>
      </prop-editor>
      <markup-layer></markup-layer>`;
  }
}
customElements.define("app-shell", AppShell);
</script>
</body>
</html>
